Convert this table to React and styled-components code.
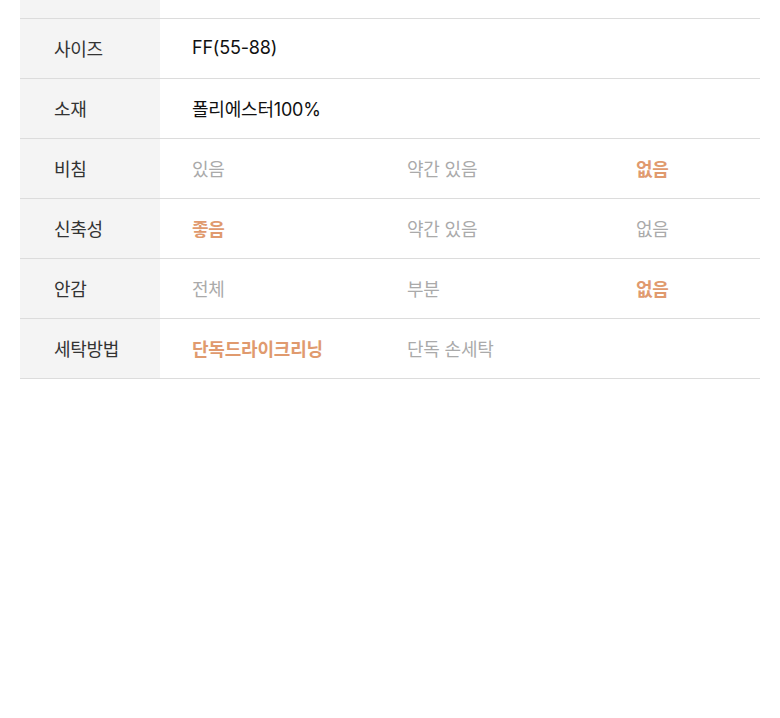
import React from "react";
import styled, { createGlobalStyle } from "styled-components";

const GlobalStyle = createGlobalStyle`
  html, body {
    margin: 0;
    padding: 0;
    background: #fff;
  }
  body {
    font-family: Inter, "Noto Sans CJK KR", sans-serif;
  }
`;

const Container = styled.div`
  padding: 0 20px;
`;

const Table = styled.div`
  display: flex;
  flex-direction: column;
`;

const Row = styled.div`
  display: flex;
  height: ${props => props.height || 60}px;
  border-bottom: 1px solid #dcdcdc;
  box-sizing: border-box;
`;

const Label = styled.div`
  width: 140px;
  flex-shrink: 0;
  background: #f4f4f4;
  padding-left: 34px;
  box-sizing: border-box;
  display: flex;
  align-items: center;
  font-size: 18px;
  color: #333;
  letter-spacing: -0.3px;
  padding-bottom: 2px;
`;

const Values = styled.div`
  flex: 1;
  display: grid;
  grid-template-columns: 215px 229px 1fr;
  padding-left: 32px;
  padding-bottom: 2px;
  align-items: center;
`;

const Value = styled.span`
  font-size: 18px;
  letter-spacing: -0.2px;
  color: ${props =>
    props.active ? "#e09a6e" : props.plain ? "#111" : "#aaa"};
  font-weight: ${props => (props.active ? 700 : 400)};
  white-space: nowrap;
`;

const rows = [
  { label: "사이즈", plain: ["FF(55-88)"] },
  { label: "소재", plain: ["폴리에스터100%"] },
  { label: "비침", options: ["있음", "약간 있음", "없음"], active: 2 },
  { label: "신축성", options: ["좋음", "약간 있음", "없음"], active: 0 },
  { label: "안감", options: ["전체", "부분", "없음"], active: 2 },
  { label: "세탁방법", options: ["단독드라이크리닝", "단독 손세탁"], active: 0 }
];

const App = () => (
  <Container>
    <GlobalStyle />
    <Table>
      <Row height={19}>
        <Label />
        <Values />
      </Row>
      {rows.map((row, idx) =>
        <Row key={idx}>
          <Label>
            {row.label}
          </Label>
          <Values>
            {row.plain
              ? row.plain.map((text, i) =>
                  <Value key={i} plain>
                    {text}
                  </Value>
                )
              : row.options.map((text, i) =>
                  <Value key={i} active={i === row.active}>
                    {text}
                  </Value>
                )}
          </Values>
        </Row>
      )}
    </Table>
  </Container>
);

export default App;
